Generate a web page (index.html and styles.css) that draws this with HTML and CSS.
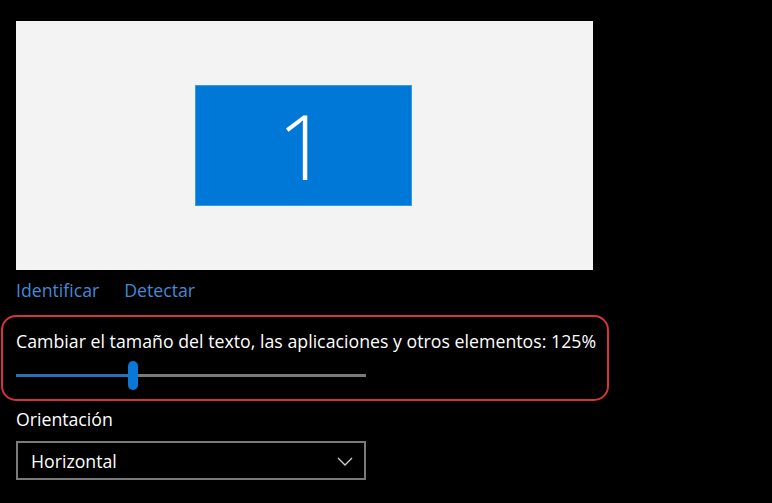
FILE: index.html
```html
<!DOCTYPE html>
<html lang="es">
<head>
<meta charset="utf-8">
<link rel="stylesheet" href="styles.css">
</head>
<body>
<div class="page">
  <div class="preview">
    <div class="monitor">1</div>
  </div>
  <div class="links">
    <span class="link">Identificar</span>
    <span class="link">Detectar</span>
  </div>
  <div class="highlight">
    <div class="label">Cambiar el tamaño del texto, las aplicaciones y otros elementos: 125%</div>
    <div class="slider">
      <div class="track-fill"></div>
      <div class="thumb"></div>
      <div class="track-rest"></div>
    </div>
  </div>
  <div class="label orient">Orientación</div>
  <div class="select">
    <span>Horizontal</span>
    <svg class="chev" width="16" height="9" viewBox="0 0 16 9"><path d="M1 1 L8 8 L15 1" fill="none" stroke="#cfcfcf" stroke-width="1.3"/></svg>
  </div>
</div>
</body>
</html>
```
FILE: styles.css
```css
html, body {
  margin: 0;
  padding: 0;
  background: #000;
  height: 100%;
}
.page {
  padding: 21px 0 0 16px;
  font-family: "Open Sans", "Noto Sans", sans-serif;
  color: #fff;
}
.preview {
  width: 577px;
  height: 249px;
  background: #f3f3f3;
  display: flex;
  align-items: center;
  justify-content: center;
}
.monitor {
  width: 215px;
  height: 119px;
  background: #0078d7;
  box-shadow: 0 0 0 1px #3a98e6;
  color: #fff;
  font-family: "Open Sans", sans-serif;
  font-weight: 300;
  font-size: 90px;
  line-height: 119px;
  text-align: center;
  margin-left: -3px;
}
.links {
  display: flex;
  gap: 25px;
  margin-top: 7px;
  height: 26px;
  font-size: 17.7px;
  line-height: 26px;
  color: #3f8bd9;
}
.highlight {
  box-sizing: border-box;
  margin-top: 12px;
  margin-left: -15px;
  width: 608px;
  height: 86px;
  padding: 13px 0 0 13px;
  border: 2px solid #d4343b;
  border-radius: 15px;
}
.label {
  font-size: 17.7px;
  line-height: 22px;
  white-space: nowrap;
  letter-spacing: 0.03px;
}
.slider {
  display: flex;
  align-items: center;
  width: 350px;
  height: 30px;
  margin-top: 8px;
}
.track-fill {
  width: 112px;
  height: 3px;
  background: #2b6fb6;
}
.thumb {
  width: 10px;
  height: 29px;
  border-radius: 5px;
  background: #0a78d7;
}
.track-rest {
  flex: 1;
  height: 3px;
  background: #7a7a7a;
}
.orient {
  margin-top: 7px;
  letter-spacing: 0;
}
.select {
  box-sizing: border-box;
  margin-top: 11px;
  width: 350px;
  height: 39px;
  border: 2px solid #7a7a7a;
  display: flex;
  align-items: center;
  justify-content: space-between;
  padding: 0 11px 0 13px;
  font-size: 17.7px;
}
.chev {
  display: block;
  margin-top: 2px;
}
```
